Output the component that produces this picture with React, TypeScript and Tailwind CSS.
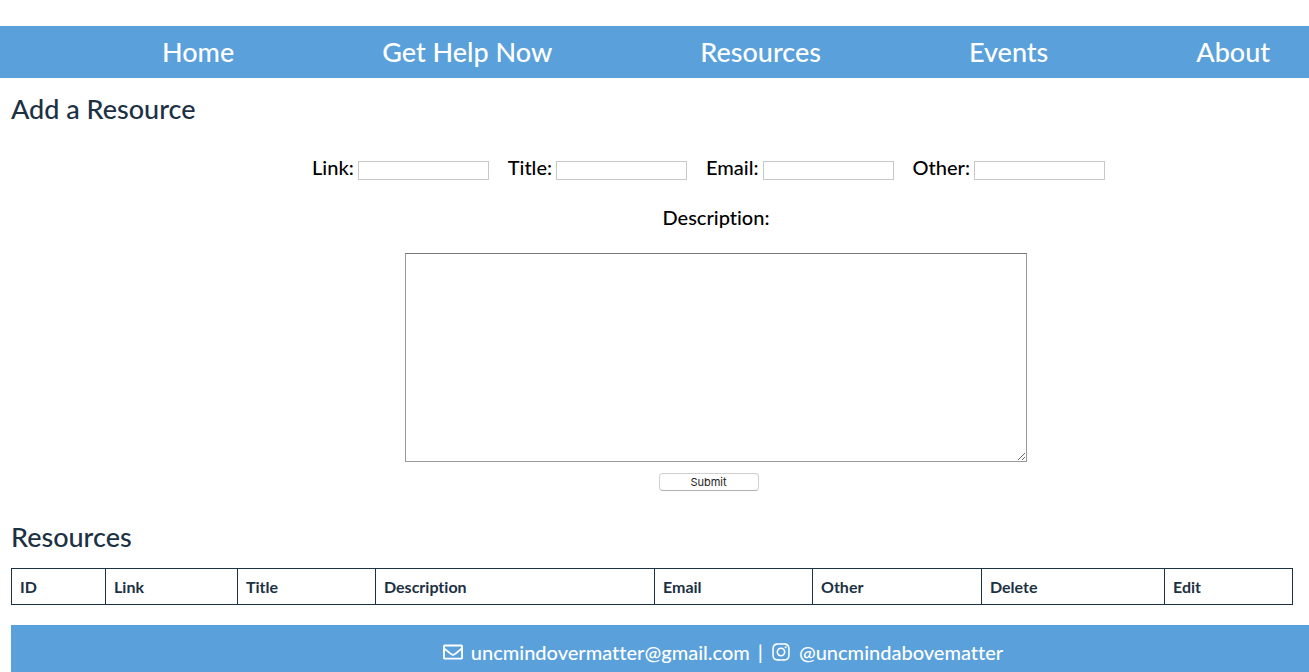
import { FaInstagram, FaRegEnvelope } from "react-icons/fa";

const navLinks = ["Home", "Get Help Now", "Resources", "Events", "About"];
const fields = ["Link", "Title", "Email", "Other"];
const columns = [
  { name: "ID", width: "w-[94px]" },
  { name: "Link", width: "w-[132px]" },
  { name: "Title", width: "w-[138px]" },
  { name: "Description", width: "w-[279px]" },
  { name: "Email", width: "w-[158px]" },
  { name: "Other", width: "w-[169px]" },
  { name: "Delete", width: "w-[183px]" },
  { name: "Edit", width: "w-[128px]" },
];

function NavBar() {
  return (
    <nav className="mt-[26px] overflow-hidden bg-[#5aa1dc]">
      <ul className="flex h-[52px] items-center gap-[148px] pl-[162px] text-[27px] font-medium whitespace-nowrap text-white">
        {navLinks.map((name) => (
          <li key={name}>
            <a href="#">{name}</a>
          </li>
        ))}
      </ul>
    </nav>
  );
}

function ResourceForm() {
  return (
    <form
      className="flex flex-col items-center pl-[113px] text-[20px] leading-7 font-medium text-black"
      onSubmit={(event) => event.preventDefault()}
    >
      <div className="flex gap-[19px]">
        {fields.map((name) => (
          <label key={name} className="flex gap-1">
            {name}:
            <input
              type="text"
              name={name.toLowerCase()}
              className="mt-2 h-[19px] w-[131px] border border-[#c8c8c8] bg-white px-1 text-[11px] outline-none"
            />
          </label>
        ))}
      </div>
      <label htmlFor="description" className="mt-[22px] ml-[15px]">
        Description:
      </label>
      <textarea
        id="description"
        name="description"
        className="mt-[22px] ml-[15px] h-[209px] w-[622px] border border-[#999999] border-t-[#777777] bg-white p-1 text-[13px] outline-none"
      />
      <button
        type="submit"
        className="mt-[11px] flex h-[18px] w-[100px] items-center justify-center rounded-[4px] border border-[#cfcfcf] border-b-[#b0b0b0] bg-white font-['Inter',sans-serif] text-[11px] font-normal text-[#222222]"
      >
        Submit
      </button>
    </form>
  );
}

function ResourceTable() {
  return (
    <table className="mt-[14px] w-full table-fixed border-collapse text-left text-[16px] leading-[19px]">
      <thead>
        <tr>
          {columns.map(({ name, width }) => (
            <th key={name} scope="col" className={`border border-[#1c3144] p-2 font-bold ${width}`}>
              {name}
            </th>
          ))}
        </tr>
      </thead>
    </table>
  );
}

function Footer() {
  return (
    <footer className="mt-5 ml-[11px] flex h-[54px] items-center justify-center gap-2 bg-[#5aa1dc] pl-[126px] text-[20px] font-medium whitespace-nowrap text-white">
      <FaRegEnvelope className="size-5" />
      <a href="mailto:uncmindovermatter@gmail.com">uncmindovermatter@gmail.com</a>
      <span>|</span>
      <FaInstagram className="size-5" />
      <a href="#">@uncmindabovematter</a>
    </footer>
  );
}

export default function App() {
  return (
    <div className="h-screen overflow-hidden bg-white font-['Lato',sans-serif] [font-variant-ligatures:none]">
      <NavBar />
      <main className="mr-4 ml-[11px] text-[#1c3144]">
        <h1 className="mt-[14px] mb-[27px] text-[27px] leading-[34px] font-medium">Add a Resource</h1>
        <ResourceForm />
        <h2 className="mt-[29px] text-[27px] leading-[34px] font-medium">Resources</h2>
        <ResourceTable />
      </main>
      <Footer />
    </div>
  );
}
